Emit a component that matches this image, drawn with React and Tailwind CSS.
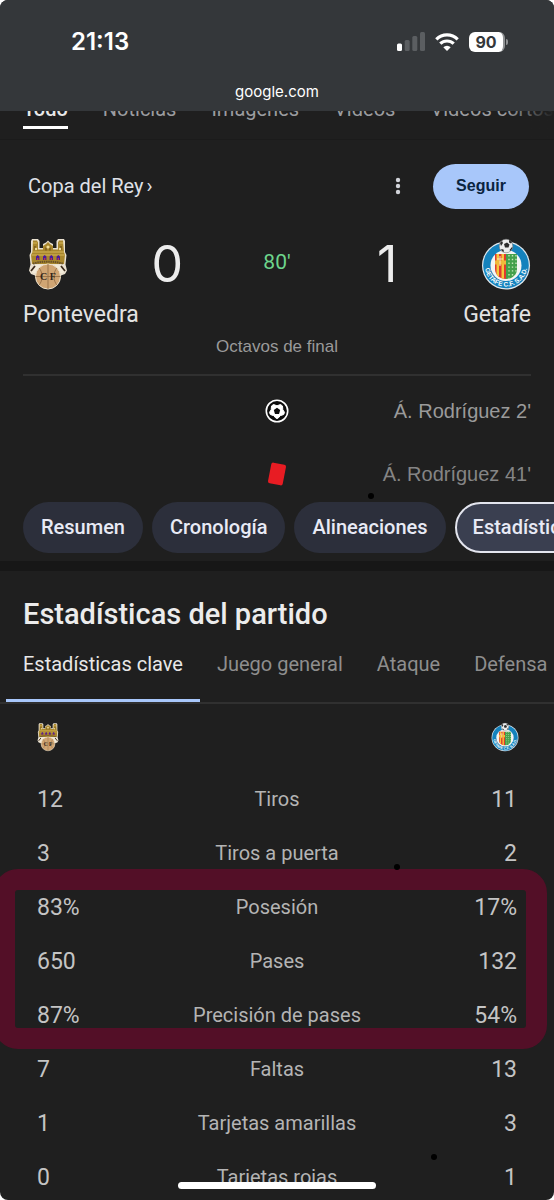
import { clsx } from 'clsx';

const searchTabs = ['Todo', 'Noticias', 'Imágenes', 'Vídeos', 'Vídeos cortos'];

const matchTabs = ['Resumen', 'Cronología', 'Alineaciones', 'Estadísticas'];

const statTabs = ['Estadísticas clave', 'Juego general', 'Ataque', 'Defensa'];

const stats = [
  { label: 'Tiros', home: '12', away: '11' },
  { label: 'Tiros a puerta', home: '3', away: '2' },
  { label: 'Posesión', home: '83%', away: '17%' },
  { label: 'Pases', home: '650', away: '132' },
  { label: 'Precisión de pases', home: '87%', away: '54%' },
  { label: 'Faltas', home: '7', away: '13' },
  { label: 'Tarjetas amarillas', home: '1', away: '3' },
  { label: 'Tarjetas rojas', home: '0', away: '1' },
];

function PontevedraCrest({ className }) {
  return (
    <svg viewBox="0 0 40 52" className={className} role="img" aria-label="Pontevedra">
      <path
        d="M4 1h6l1.500 2v7h3.500V6l3-1.500 2-2 2 2L25 6v4h3.500V3L30 1h6l1 2v11l1.500 3-1 9.500 1.500 6-2 3.500-4 1.500A13.500 13.500 0 0 1 7 37.500L3 36l-2-3.500 1.500-6-1-9.500L3 14V3z"
        fill="#e9e0cf"
      />
      <path
        d="M5 2.500h4l1 2v7h5V8l3-2 2-2 2 2 3 2v3.500h5v-7l1-2h4L36 14l1 3-1 9H4l-1-9 1.500-3z"
        fill="#a8862c"
      />
      <path d="M5 5h4M31 5h4M4 14h32M3.500 17h33" stroke="#d6b659" strokeWidth="1" />
      <path d="M7 8v4M33 8v4M18 9.500v3M22 9.500v3" stroke="#6d4d18" strokeWidth="1.200" />
      <circle cx="8" cy="11" r="1.200" fill="#f0dc98" />
      <circle cx="20" cy="9" r="1.600" fill="#f0dc98" />
      <circle cx="32" cy="11" r="1.200" fill="#f0dc98" />
      <path d="M8 22v-3.500l1.700-1.500 1.700 1.500V22zM15 22v-3.500l1.700-1.500 1.700 1.500V22zM21.600 22v-3.500l1.700-1.500 1.700 1.500V22zM28.600 22v-3.500l1.700-1.500 1.700 1.500V22z" fill="#4a1a9c" />
      <path d="M9.700 20v2M16.700 20v2M23.300 20v2M30.300 20v2" stroke="#d0432c" strokeWidth="1.200" />
      <path d="M5 25.500c10-2.500 20-2.500 30 0" stroke="#67512b" strokeWidth="2" strokeDasharray="1.500 .7" fill="none" />
      <path d="M3 31c2-4 8-4.500 17-4.500S35 27 37 31l-2 4H5z" fill="#f2ead9" />
      <path d="M3 33l4-5M37 33l-4-5" stroke="#3b2a1c" strokeWidth="1.800" />
      <circle cx="20" cy="38.500" r="12.500" fill="#d0a573" stroke="#efe3cc" strokeWidth="1" />
      <path d="M20 26v25M7.500 38.500h25M11 30c4 4 4 13 0 17M29 30c-4 4-4 13 0 17" stroke="#8f6a42" strokeWidth=".8" fill="none" />
      <text x="20" y="42" textAnchor="middle" fontSize="10" fontWeight="700" fontFamily="Liberation Serif, serif" fill="#33251b">
        C F
      </text>
    </svg>
  );
}

function GetafeCrest({ className, id }) {
  return (
    <svg viewBox="0 0 50 52" className={className} role="img" aria-label="Getafe">
      <defs>
        <path id={`${id}-ring`} d="M4.500 22a21.200 21.200 0 1 0 41 0" />
        <clipPath id={`${id}-shield`}>
          <path d="M14 16h22v15c0 6-5 10-11 10s-11-4-11-10z" />
        </clipPath>
      </defs>
      <circle cx="25" cy="27.500" r="24" fill="#dfe8ee" />
      <circle cx="25" cy="27.500" r="22.800" fill="#1482bd" />
      <circle cx="25" cy="27.500" r="15.500" fill="#f4f5f3" />
      <g clipPath={`url(#${id}-shield)`}>
        <path d="M13 15h12v28H13z" fill="#e2392f" />
        <path d="M15.500 15h2.500v28h-2.500zM20.500 15h2.500v28h-2.500z" fill="#f3c73a" />
        <path d="M13 22.500h12v4H13z" fill="#f0b93b" />
        <path d="M25 15h12v28H25z" fill="#43a04b" />
        <path d="M28 17v24M31.500 17v24M35 17v24" stroke="#c5e6b8" strokeWidth="1.400" strokeDasharray="1.400 2.400" />
      </g>
      <path d="M19 18v10M16 21h6" stroke="#fbe8bb" strokeWidth="1" />
      <circle cx="25" cy="8" r="6.800" fill="#eceded" stroke="#777" strokeWidth=".6" />
      <path d="M23 6l3-1.500 2.500 2-1 3h-3.500zM19 5l2-2 1 2-2 3zM28 2l3 2-1 1.500-2-1zM20 11l2.500.5.5 2.500-2-1zM28.500 12l2.500-3 .5 1-2 3z" fill="#2c2c2c" />
      <text fontSize="6.500" fontWeight="700" fontFamily="Liberation Sans, sans-serif" fill="#fff">
        <textPath href={`#${id}-ring`} startOffset="50%" textAnchor="middle">
          GETAFE C.F. S.A.D.
        </textPath>
      </text>
    </svg>
  );
}

function StatusBar() {
  return (
    <header className="relative z-10 shrink-0 bg-[#34373a] text-white">
      <div className="flex h-[83px] items-center justify-between pr-[46px] pl-[71px]">
        <span className="font-[Inter,sans-serif] text-[24px] font-semibold">21:13</span>
        <div className="flex items-center gap-[10px]">
          <svg viewBox="0 0 28 19" className="h-[19px] w-[28px]" aria-hidden="true">
            <rect x="0" y="11.500" width="5" height="7.500" rx="1.500" fill="#fff" />
            <rect x="7.700" y="8" width="5" height="11" rx="1.500" fill="#5b5e61" />
            <rect x="15.300" y="4" width="5" height="15" rx="1.500" fill="#5b5e61" />
            <rect x="23" y="0" width="5" height="19" rx="1.500" fill="#5b5e61" />
          </svg>
          <svg viewBox="0 0 24 18" className="h-[18px] w-[24px]" aria-hidden="true" fill="none" stroke="#fff" strokeWidth="3.200">
            <path d="M1.300 6.300a15.300 15.300 0 0 1 21.400 0" />
            <path d="M5.300 10.700a9.600 9.600 0 0 1 13.400 0" />
            <path d="M12 18l-3.700-3.700a5.300 5.300 0 0 1 7.400 0z" fill="#fff" stroke="none" />
          </svg>
          <div className="flex items-center gap-px">
            <span className="flex h-5 w-9 items-center justify-center rounded-md border-r-2 border-[#8f9193] bg-white font-[Inter,sans-serif] text-[16px] font-bold text-[#34373a]">
              90
            </span>
            <span className="h-[6px] w-[2px] rounded-r-full bg-[#8f9193]" />
          </div>
        </div>
      </div>
      <p className="h-7 text-center font-[Inter,sans-serif] text-[15px] leading-[18px]">google.com</p>
    </header>
  );
}

function SearchNav() {
  return (
    <nav className="relative -mt-[20px] flex h-[49px] shrink-0 gap-[35px] overflow-hidden border-b border-[#1b1b1b] px-[23px] text-[20px] whitespace-nowrap text-[#9b9c9f]">
      {searchTabs.map((tab, i) => (
        <a
          key={tab}
          href="#"
          className={clsx('h-[38px] leading-[36px]', i === 0 && 'border-b-3 border-white font-medium text-[#e8e8e8]')}
        >
          {tab}
        </a>
      ))}
      <div className="absolute inset-y-0 right-0 w-12 bg-linear-to-l from-[#1f1f1f] to-transparent" />
    </nav>
  );
}

function MatchHeader() {
  return (
    <section>
      <div className="flex h-[92px] items-center pr-[25px] pl-[28px]">
        <a href="#" className="flex flex-1 gap-[3px] text-[20px] text-[#dfe1e8]">
          <span>Copa del Rey</span>
          <span>›</span>
        </a>
        <button type="button" aria-label="Más opciones" className="mr-[32px]">
          <svg viewBox="0 0 6 18" className="h-[18px] w-[6px]" fill="#d2d4da">
            <circle cx="3" cy="3" r="2.200" />
            <circle cx="3" cy="9" r="2.200" />
            <circle cx="3" cy="15" r="2.200" />
          </svg>
        </button>
        <button
          type="button"
          className="h-[45px] w-24 rounded-full bg-[#a8c7fa] font-['Liberation_Sans',sans-serif] text-[16px] font-bold text-[#0a2440]"
        >
          Seguir
        </button>
      </div>

      <div className="grid grid-cols-[1fr_60px_1fr] px-[23px]">
        <div className="flex h-[64px] items-center justify-between pr-[64px] pl-[5px]">
          <PontevedraCrest className="h-[52px] w-[40px]" />
          <span className="font-[Inter,sans-serif] text-[50px] leading-none text-[#ececec]">0</span>
        </div>
        <span className="pt-[15px] text-center text-[21px] text-[#6dd58c]">80'</span>
        <div className="flex h-[64px] items-center justify-between pl-[70px]">
          <span className="font-[Inter,sans-serif] text-[50px] leading-none text-[#ececec]">1</span>
          <GetafeCrest id="main" className="h-[52px] w-[50px]" />
        </div>
      </div>
      <div className="flex justify-between px-[23px] text-[23px] leading-[38px] text-[#e3e3e3]">
        <span>Pontevedra</span>
        <span>Getafe</span>
      </div>
      <p className="text-center font-['Liberation_Sans',sans-serif] text-[17px] leading-[26px] text-[#9a9a9a]">
        Octavos de final
      </p>

      <div className="mx-[23px] mt-[14px] border-t-2 border-[#303030] font-['Liberation_Sans',sans-serif] text-[20px] text-[#9a9a9a]">
        <div className="grid h-[70px] grid-cols-[1fr_24px_1fr] items-center">
          <svg viewBox="0 0 24 24" className="col-start-2 size-6" role="img" aria-label="Gol">
            <circle cx="12" cy="12" r="10.700" fill="#0c0c0c" stroke="#fff" strokeWidth="1.600" />
            <path d="M8.500 5.500 12 6.800l3.500-1.300 2 1.500.3 3.700 1.700 2.600-.8 2.200-3.500 1.200L13 19.300h-2l-2.200-2.600-3.500-1.200-.8-2.200 1.700-2.600L6.500 7z" fill="#fff" stroke="#fff" strokeLinejoin="round" />
            <path d="m12 8.800 3.200 2.300-1.200 3.800h-4l-1.200-3.800z" fill="#0c0c0c" />
          </svg>
          <span className="text-right">Á. Rodríguez 2'</span>
        </div>
        <div className="grid h-[56px] grid-cols-[1fr_24px_1fr] items-center">
          <svg viewBox="0 0 24 24" className="col-start-2 size-6" role="img" aria-label="Tarjeta roja">
            <rect x="4.500" y="1.500" width="15" height="21" rx="2" fill="#e81c23" transform="rotate(11 12 12)" />
          </svg>
          <span className="text-right text-[#858585]">Á. Rodríguez 41'</span>
        </div>
      </div>
    </section>
  );
}

function MatchTabs() {
  return (
    <div className="relative shrink-0 border-b-10 border-[#171717]">
      <span className="absolute -top-[9px] left-[368px] size-[6px] rounded-full bg-black" />
      <div className="flex gap-[9px] overflow-hidden pb-[8px] pl-[23px]">
        {matchTabs.map((tab) => (
          <button
            key={tab}
            type="button"
            className={clsx(
              'h-[51px] shrink-0 rounded-full border-2 px-[16px] pb-[2px] text-[20px] font-medium text-[#e8eaf5]',
              tab === 'Estadísticas' ? 'border-[#e3e5ee] bg-[#3a3f50]' : 'border-transparent bg-[#2c2f3b]'
            )}
          >
            {tab}
          </button>
        ))}
      </div>
    </div>
  );
}

function StatsPanel() {
  return (
    <section>
      <h2 className="px-[23px] pt-[22px] text-[29px] leading-[42px] font-medium text-[#ececec]">
        Estadísticas del partido
      </h2>
      <div className="flex overflow-hidden border-b-2 border-[#303030] pl-[6px] whitespace-nowrap">
        {statTabs.map((tab, i) => (
          <button
            key={tab}
            type="button"
            className={clsx(
              'h-[67px] shrink-0 border-b-3 px-[17px] pb-[6px] text-[20px]',
              i === 0 ? 'border-[#a8c7fa] text-[#e8e8e8]' : 'border-transparent text-[#8e8e8e]'
            )}
          >
            {tab}
          </button>
        ))}
      </div>

      <div className="relative">
        <table className="w-full table-fixed text-[#c4c4c4]">
          <thead>
            <tr className="h-[69px]">
              <th className="w-[130px] pb-[4px] pl-[37px]">
                <PontevedraCrest className="h-[30px] w-[22px]" />
              </th>
              <th />
              <th className="w-[130px] pr-[35px] pb-[4px]">
                <GetafeCrest id="small" className="ml-auto h-[30px] w-[28px]" />
              </th>
            </tr>
          </thead>
          <tbody>
            {stats.map((stat) => (
              <tr key={stat.label} className="h-[54px]">
                <td className="pl-[37px] text-[23px]">{stat.home}</td>
                <td className="pb-[2px] text-center text-[20px] text-[#b4b4b4]">{stat.label}</td>
                <td className="pr-[37px] text-right text-[23px]">{stat.away}</td>
              </tr>
            ))}
          </tbody>
        </table>

        {/* hand-drawn marker round the possession and passing rows */}
        <div className="pointer-events-none absolute top-[165px] right-[7px] -left-[6px] h-[180px] rounded-3xl border-[21px] border-[#530f27]" />
        <span className="absolute top-[160px] left-[394px] size-[6px] rounded-full bg-black" />
        <span className="absolute top-[450px] left-[431px] size-[6px] rounded-full bg-black" />
      </div>
    </section>
  );
}

export default function App() {
  return (
    <div className="relative flex h-screen flex-col overflow-hidden rounded-lg bg-[#1f1f1f] font-[Roboto,sans-serif]">
      <StatusBar />
      <SearchNav />
      <main>
        <MatchHeader />
        <MatchTabs />
        <StatsPanel />
      </main>
      <div className="absolute inset-x-0 bottom-[11px] mx-auto h-[7px] w-[198px] rounded-full bg-white" />
    </div>
  );
}
